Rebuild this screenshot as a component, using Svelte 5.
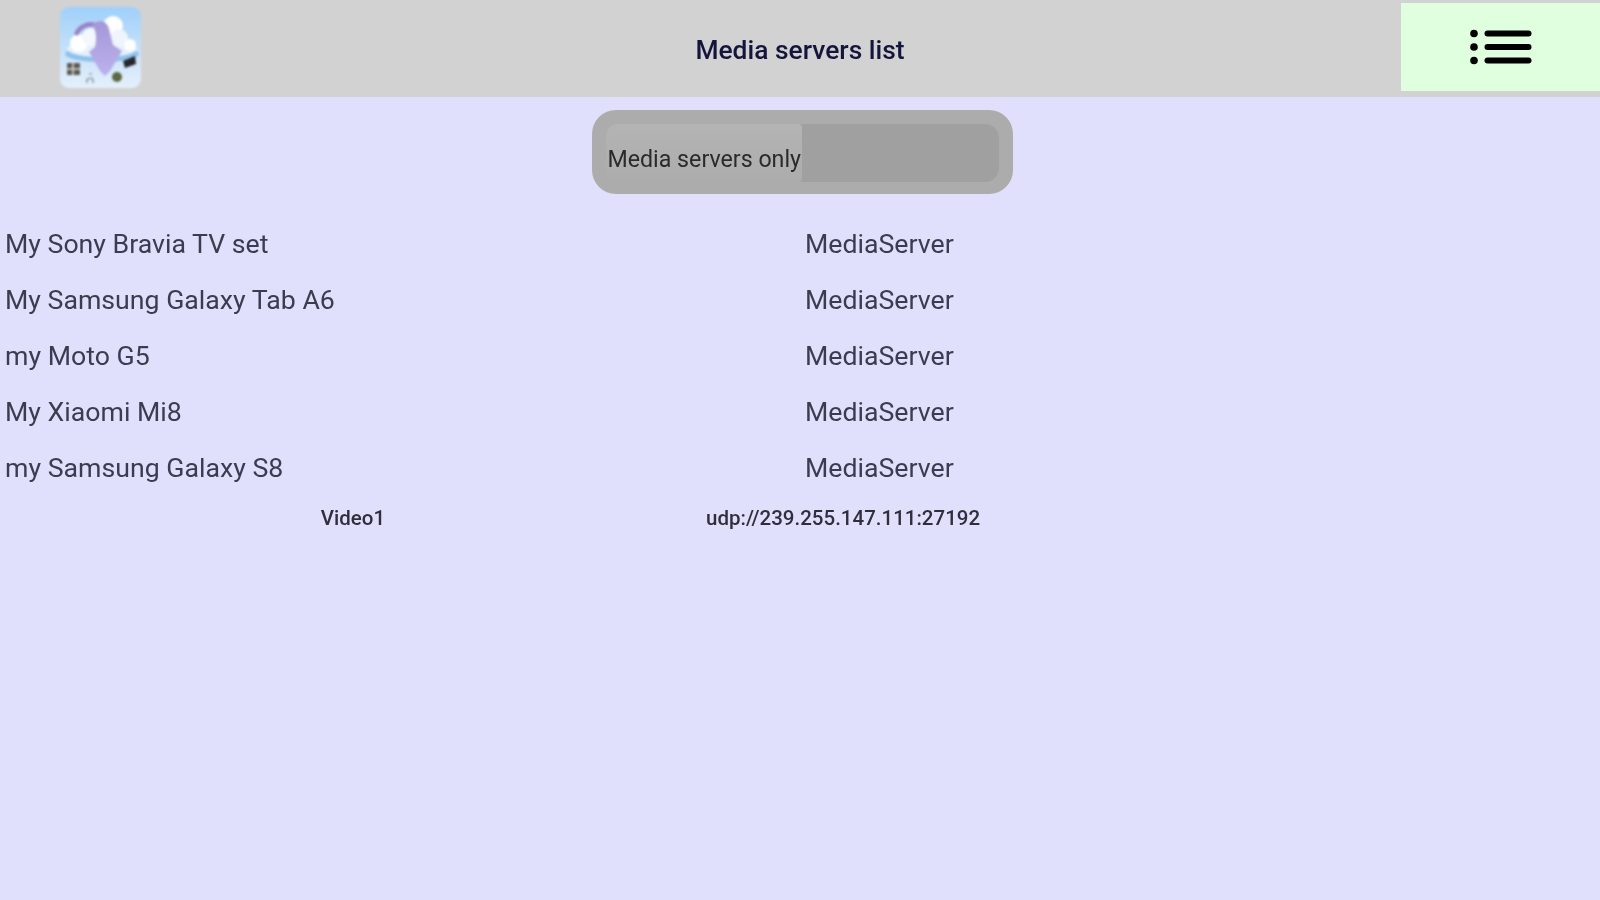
<script lang="ts">
  const servers = [
    "My Sony Bravia TV set",
    "My Samsung Galaxy Tab A6",
    "my Moto G5",
    "My Xiaomi Mi8",
    "my Samsung Galaxy S8",
  ];
</script>

<div class="page">
  <header class="topbar">
    <div class="logo">
      <svg width="81" height="81" viewBox="0 0 81 81">
        <defs>
          <linearGradient id="sky" x1="0" y1="0" x2="0" y2="1">
            <stop offset="0" stop-color="#9fd0fb" />
            <stop offset="0.5" stop-color="#c4e0fa" />
            <stop offset="1" stop-color="#e4f0fb" />
          </linearGradient>
          <linearGradient id="arrow" x1="0" y1="0" x2="0" y2="1">
            <stop offset="0" stop-color="#a597d8" />
            <stop offset="1" stop-color="#bcb2ec" />
          </linearGradient>
        </defs>
        <rect width="81" height="81" rx="9" fill="url(#sky)" />
        <ellipse cx="42" cy="47" rx="37" ry="8" fill="#8fc2ea" />
        <ellipse cx="42" cy="42" rx="35" ry="8" fill="#e4f1fc" />
        <circle cx="19" cy="36" r="9" fill="#fff" />
        <circle cx="31" cy="30" r="9" fill="#f4f8fd" />
        <circle cx="53" cy="19" r="10" fill="#fff" />
        <circle cx="59" cy="31" r="9" fill="#eef5fc" />
        <circle cx="70" cy="38" r="6" fill="#fff" />
        <path d="M16 28 C19 19 30 15 37 19" fill="none" stroke="#9a83c8" stroke-width="4.5" />
        <path d="M32 18 C38 12 47 13 49 22 L53 38 L62 44 L50 64 L45 69 L40 64 L29 45 L35 40 C37 30 36 23 32 18 Z" fill="url(#arrow)" />
        <rect x="7" y="56" width="13" height="12" rx="1" fill="#5d5a50" />
        <path d="M13 56 V68 M7 62 H20" stroke="#d5d8d8" stroke-width="1.5" />
        <path d="M63 54 L75 49 L76 57 L65 61 Z" fill="#26262c" />
        <circle cx="57" cy="70" r="5" fill="#5b6a42" />
        <path d="M27 76 V72 M33 76 V72 M27 72 L33 71 M29 67 H32" stroke="#77808a" stroke-width="1.2" fill="none" />
      </svg>
    </div>
    <h1>Media servers list</h1>
    <button class="menu" aria-label="Menu">
      <svg width="62" height="36" viewBox="0 0 62 36">
        <circle cx="4" cy="4.5" r="3.8" />
        <circle cx="4" cy="18" r="3.8" />
        <circle cx="4" cy="31.5" r="3.8" />
        <rect x="14.5" y="1.5" width="47" height="6" rx="3" />
        <rect x="14.5" y="15" width="47" height="6" rx="3" />
        <rect x="14.5" y="28.5" width="47" height="6" rx="3" />
      </svg>
    </button>
  </header>

  <div class="toggle-row">
    <div class="toggle">
      <div class="track">
        <div class="thumb"><span>Media servers only</span></div>
      </div>
    </div>
  </div>

  <ul class="servers">
    {#each servers as name}
      <li>
        <span>{name}</span>
        <span>MediaServer</span>
      </li>
    {/each}
  </ul>

  <div class="stream">
    <span class="stream-name">Video1</span>
    <span>udp://239.255.147.111:27192</span>
  </div>
</div>

<style>
  :global(body) {
    background: #e0e0fc;
  }

  .page {
    height: 900px;
    overflow: hidden;
    background: #e0e0fc;
    font-family: Roboto, "Liberation Sans", sans-serif;
  }

  .topbar {
    position: relative;
    display: flex;
    align-items: center;
    justify-content: center;
    height: 97px;
    background: #d2d2d2;
  }

  .logo {
    position: absolute;
    left: 60px;
    top: 7px;
    height: 81px;
    filter: blur(0.9px);
  }

  h1 {
    margin: 3px 0 0;
    font-size: 26.4px;
    font-weight: 500;
    color: #14143c;
    filter: blur(0.5px);
  }

  .menu {
    position: absolute;
    right: 0;
    top: 3px;
    display: flex;
    align-items: center;
    justify-content: center;
    width: 199px;
    height: 88px;
    padding: 0;
    border: none;
    background: #dfffdf;
  }

  .menu svg {
    filter: blur(0.5px);
  }

  .toggle-row {
    display: flex;
    justify-content: center;
    padding: 13px 0 0 4px;
  }

  .toggle {
    box-sizing: border-box;
    width: 421px;
    height: 84px;
    padding: 14px;
    background: #acacac;
    border-radius: 24px;
  }

  .track {
    height: 58px;
    background: #a0a0a0;
    border-radius: 14px;
  }

  .thumb {
    box-sizing: border-box;
    width: 196px;
    height: 58px;
    padding: 22px 0 0 2px;
    font-size: 23.2px;
    line-height: 27px;
    white-space: nowrap;
    color: #2a2a2a;
    background: linear-gradient(#b4b4b4, #acacac);
    border-radius: 12px 4px 4px 12px;
  }

  .thumb span {
    display: block;
    filter: blur(0.6px);
  }

  .servers {
    margin: 23px 0 0;
    padding: 0;
    list-style: none;
    font-size: 26.7px;
    color: #3c3c50;
  }

  .servers li {
    display: grid;
    grid-template-columns: 800px 1fr;
    box-sizing: border-box;
    height: 56px;
    padding-left: 5px;
    line-height: 55px;
    filter: blur(0.6px);
  }

  .stream {
    display: flex;
    margin-top: 9px;
    font-size: 20.5px;
    font-weight: 500;
    line-height: 24px;
    color: #2e2e3c;
    filter: blur(0.5px);
  }

  .stream-name {
    width: 706px;
    text-align: center;
  }
</style>
